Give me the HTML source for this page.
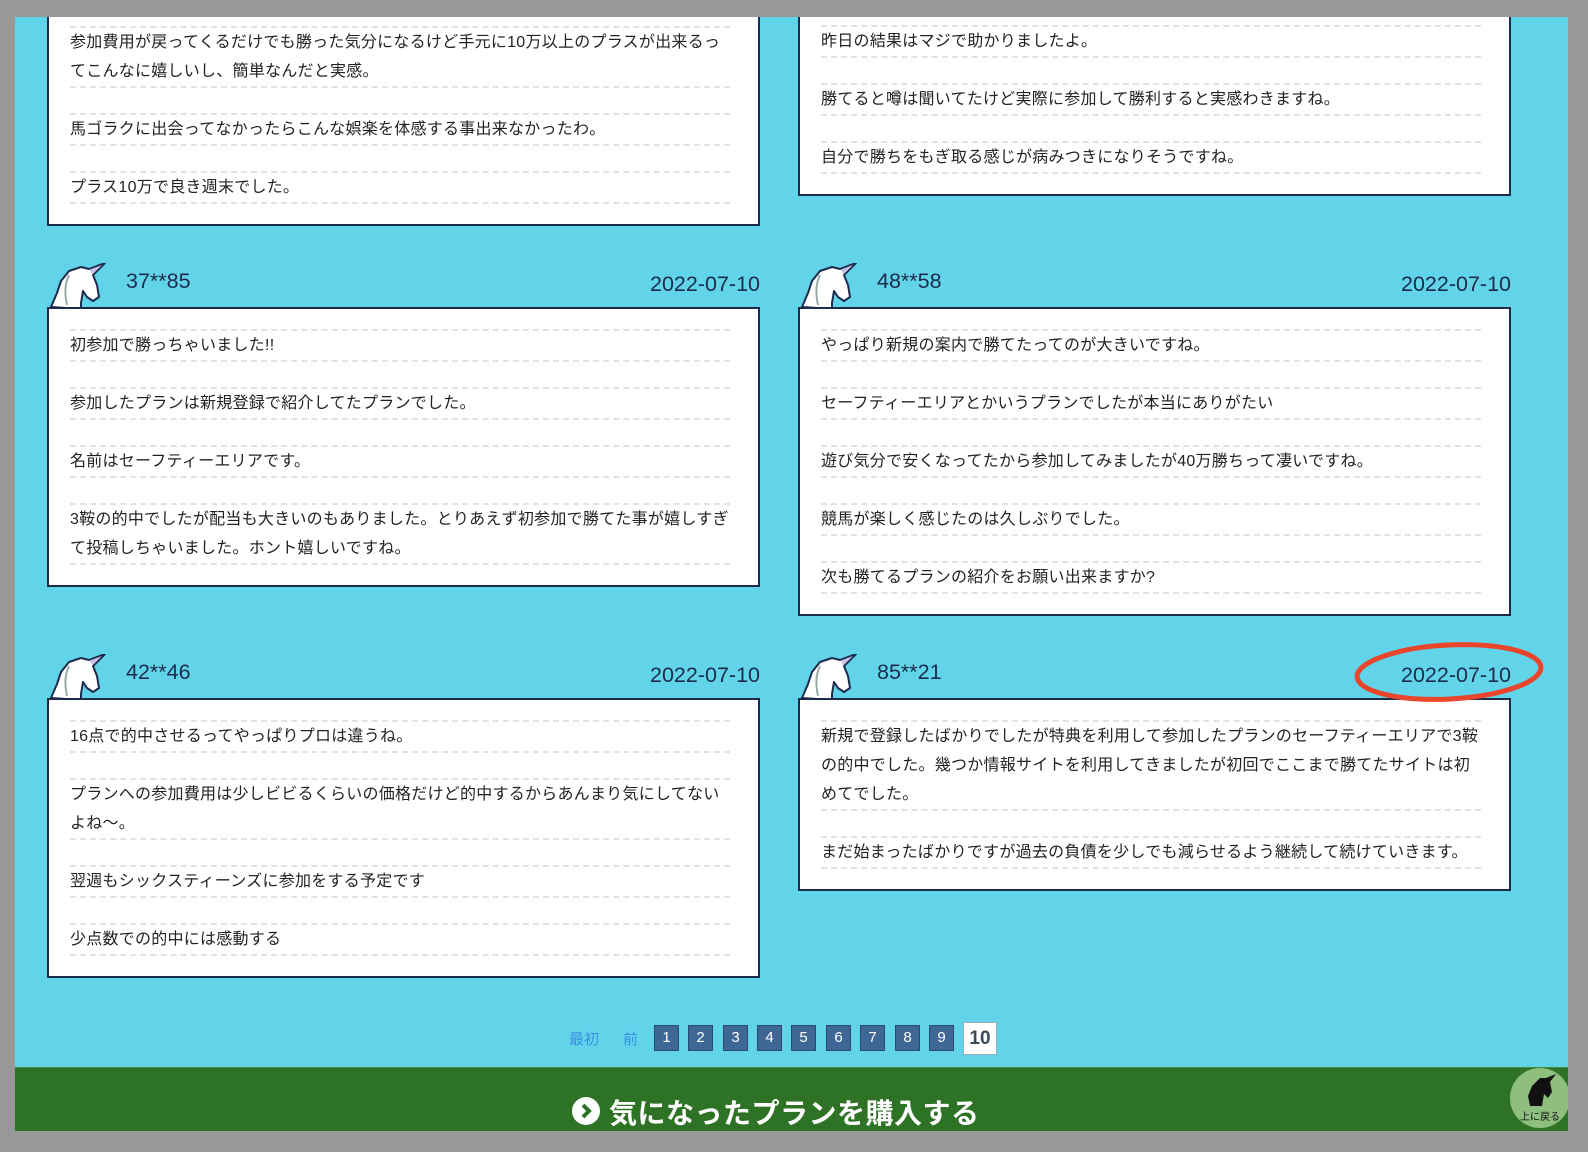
<!DOCTYPE html>
<html><head><meta charset="utf-8"><style>
*{margin:0;padding:0;box-sizing:border-box}
body{width:1588px;height:1152px;background:#62d4ea;position:relative;overflow:hidden;font-family:"Liberation Sans","Noto Sans CJK JP",sans-serif;color:#222}
.g{position:absolute;background:#989898;z-index:10}
.box{position:absolute;background:#fff;border:2px solid #1c2b4c;padding:20px 28px 20px 21px;width:713px}
.box p{border-top:2px dashed #e2e2e2;border-bottom:2px dashed #e2e2e2;font-size:16px;line-height:29px;margin-bottom:25px;letter-spacing:0.25px}
.box p:last-child{margin-bottom:0}
.hd{position:absolute;width:713px;height:46px}
.hd svg{position:absolute;left:0;top:0}
.nm{position:absolute;left:79px;top:6px;font-size:21.5px;color:#1c2b4c}
.dt{position:absolute;right:0;top:9px;font-size:21.5px;color:#1c2b4c}
.pg{position:absolute;top:1025px;height:26px;width:25px;background:#3e6796;border:1px solid #2b4a70;color:#fff;font-size:15px;text-align:center;line-height:24px}
</style></head><body>
<div class="g" style="left:0;top:0;width:1588px;height:17px"></div>
<div class="g" style="left:0;top:0;width:15px;height:1152px"></div>
<div class="g" style="left:1568px;top:0;width:20px;height:1152px"></div>
<div class="g" style="left:0;top:1131px;width:1588px;height:21px"></div>

<div class="box" style="left:47px;top:4px">
<p>参加費用が戻ってくるだけでも勝った気分になるけど手元に10万以上のプラスが出来るってこんなに嬉しいし、簡単なんだと実感。</p>
<p>馬ゴラクに出会ってなかったらこんな娯楽を体感する事出来なかったわ。</p>
<p>プラス10万で良き週末でした。</p></div>
<div class="box" style="left:798px;top:3px">
<p>昨日の結果はマジで助かりましたよ。</p>
<p>勝てると噂は聞いてたけど実際に参加して勝利すると実感わきますね。</p>
<p>自分で勝ちをもぎ取る感じが病みつきになりそうですね。</p></div>

<svg width="0" height="0" style="position:absolute"><defs><g id="u"><path d="M4 44 L10 30 L14 18 L22 8 L34 4 L42 6 L58 0 L46 12 L50 22 L52 34 L46 38 L40 34 L36 28 L34 40 L34 46 Z" fill="#fff" stroke="#1c2b4c" stroke-width="2" stroke-linejoin="round"/><path d="M42 6 L58 0 L46 12" fill="#c9c3e6" stroke="#1c2b4c" stroke-width="1.5"/><path d="M22 12 Q16 24 20 42" fill="none" stroke="#9aa" stroke-width="2"/></g></defs></svg>

<div class="hd" style="left:47px;top:263px"><svg width="64" height="46"><use href="#u"/></svg><span class="nm">37**85</span><span class="dt">2022-07-10</span></div>
<div class="box" style="left:47px;top:307px">
<p>初参加で勝っちゃいました!!</p>
<p>参加したプランは新規登録で紹介してたプランでした。</p>
<p>名前はセーフティーエリアです。</p>
<p>3鞍の的中でしたが配当も大きいのもありました。とりあえず初参加で勝てた事が嬉しすぎて投稿しちゃいました。ホント嬉しいですね。</p></div>
<div class="hd" style="left:798px;top:263px"><svg width="64" height="46"><use href="#u"/></svg><span class="nm">48**58</span><span class="dt">2022-07-10</span></div>
<div class="box" style="left:798px;top:307px">
<p>やっぱり新規の案内で勝てたってのが大きいですね。</p>
<p>セーフティーエリアとかいうプランでしたが本当にありがたい</p>
<p>遊び気分で安くなってたから参加してみましたが40万勝ちって凄いですね。</p>
<p>競馬が楽しく感じたのは久しぶりでした。</p>
<p>次も勝てるプランの紹介をお願い出来ますか?</p></div>

<div class="hd" style="left:47px;top:654px"><svg width="64" height="46"><use href="#u"/></svg><span class="nm">42**46</span><span class="dt">2022-07-10</span></div>
<div class="box" style="left:47px;top:698px">
<p>16点で的中させるってやっぱりプロは違うね。</p>
<p>プランへの参加費用は少しビビるくらいの価格だけど的中するからあんまり気にしてないよね～。</p>
<p>翌週もシックスティーンズに参加をする予定です</p>
<p>少点数での的中には感動する</p></div>
<div class="hd" style="left:798px;top:654px"><svg width="64" height="46"><use href="#u"/></svg><span class="nm">85**21</span><span class="dt">2022-07-10</span></div>
<div class="box" style="left:798px;top:698px">
<p>新規で登録したばかりでしたが特典を利用して参加したプランのセーフティーエリアで3鞍の的中でした。幾つか情報サイトを利用してきましたが初回でここまで勝てたサイトは初めてでした。</p>
<p>まだ始まったばかりですが過去の負債を少しでも減らせるよう継続して続けていきます。</p></div>
<svg style="position:absolute;left:1352px;top:640px" width="195" height="64"><ellipse cx="97" cy="32" rx="92" ry="27" fill="none" stroke="#e8452a" stroke-width="5" transform="rotate(-3 97 32)"/></svg>

<div style="position:absolute;left:569px;top:1028px;font-size:15px;color:#3a8fe0">最初</div>
<div style="position:absolute;left:623px;top:1028px;font-size:15px;color:#3a8fe0">前</div>
<div class="pg" style="left:654px">1</div><div class="pg" style="left:688px">2</div><div class="pg" style="left:723px">3</div><div class="pg" style="left:757px">4</div><div class="pg" style="left:791px">5</div><div class="pg" style="left:826px">6</div><div class="pg" style="left:860px">7</div><div class="pg" style="left:895px">8</div><div class="pg" style="left:929px">9</div>
<div class="pg" style="left:963px;top:1022px;width:34px;height:33px;line-height:31px;background:#fff;color:#3a4a5a;font-weight:bold;font-size:19px;border-color:#9ab"></div>
<div style="position:absolute;left:963px;top:1022px;width:34px;height:33px;line-height:33px;text-align:center;color:#3a4a5a;font-weight:bold;font-size:19px">10</div>

<div style="position:absolute;left:15px;top:1067px;width:1553px;height:64px;background:#2e7325;border-top:1px solid #4a8a40"></div>
<div style="position:absolute;left:572px;top:1097px;width:28px;height:28px;border-radius:50%;background:#fff"><svg width="28" height="28"><path d="M11 8 L17 14 L11 20" fill="none" stroke="#2e7325" stroke-width="4"/></svg></div>
<div style="position:absolute;left:609px;top:1092px;font-size:28px;font-weight:bold;color:#fff;letter-spacing:0.5px">気になったプランを購入する</div>
<div style="position:absolute;left:1510px;top:1068px;width:60px;height:60px;border-radius:50%;background:#8fbf7f"><svg width="60" height="44" style="position:absolute;left:0;top:0"><path d="M20 38 L18 28 L22 18 L30 10 L36 10 L46 6 L40 14 L42 24 L38 30 L34 26 L32 38 Z" fill="#111"/></svg><div style="position:absolute;left:0;width:60px;top:40px;text-align:center;font-size:10px;color:#111">上に戻る</div></div>
</body></html>
